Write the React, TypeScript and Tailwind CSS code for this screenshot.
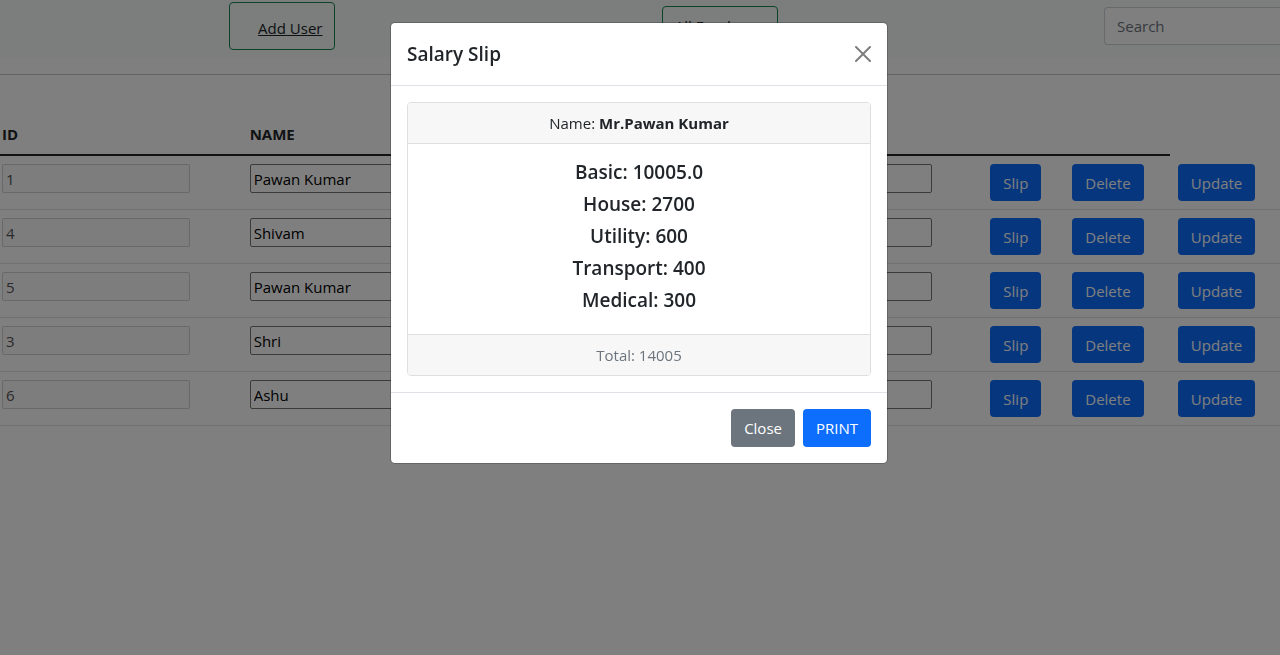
import React from "react";

type Employee = { id: number; name: string };

const employees: Employee[] = [
  { id: 1, name: "Pawan Kumar" },
  { id: 4, name: "Shivam" },
  { id: 5, name: "Pawan Kumar" },
  { id: 3, name: "Shri" },
  { id: 6, name: "Ashu" },
];

const slipLines: [string, string][] = [
  ["Basic", "10005.0"],
  ["House", "2700"],
  ["Utility", "600"],
  ["Transport", "400"],
  ["Medical", "300"],
];

function RowButton({ children }: { children: React.ReactNode }) {
  return (
    <button type="button" className="block h-[37px] rounded bg-[#0d6efd] px-[13px] text-[15px] text-white">
      {children}
    </button>
  );
}

function RowInput({ label, value, disabled }: { label: string; value: string; disabled?: boolean }) {
  return (
    <input
      type="text"
      aria-label={label}
      defaultValue={value}
      disabled={disabled}
      className="block h-[29px] w-[188px] rounded-xs border border-[#767676] bg-white px-[3px] text-[15px] text-black disabled:border-[#767676]/30 disabled:bg-[#efefef]/30 disabled:text-[#545454]"
    />
  );
}

function NavBar() {
  return (
    <nav className="flex h-[57px] items-start bg-[#f6fcf9] pl-[17.9%]">
      <div className="mt-0.5 flex h-12 items-center rounded border border-[#198754] pt-1 pr-3 pl-7">
        <a href="#add" className="underline">Add User</a>
      </div>
      <div className="flex-1" />
      <div className="mt-1.5 flex h-10 w-[116px] items-center rounded border border-[#198754] px-3">
        <a href="#all" className="whitespace-nowrap">All Employee</a>
      </div>
      <div className="flex-1" />
      <input
        type="search"
        aria-label="Search"
        placeholder="Search"
        className="mt-[7px] h-[38px] w-44 rounded-l border border-r-0 border-[#ced4da] bg-white px-3 placeholder:text-[#6c757d]"
      />
    </nav>
  );
}

function EmployeeTable() {
  const head = "border-b-2 border-[#212529] px-0.5 pb-2 text-left align-bottom font-bold";
  const cell = "border-b border-[#dee2e6] py-2 pl-0.5 align-top";
  const action = "border-b border-[#dee2e6] py-2 pl-2 align-top";
  return (
    <table className="w-full table-fixed border-separate border-spacing-0">
      <colgroup>
        <col className="w-[19.35%]" />
        <col className="w-[19.3%]" />
        <col className="w-[19.3%]" />
        <col className="w-[18.8%]" />
        <col className="w-[6.4%]" />
        <col className="w-[8.25%]" />
        <col />
      </colgroup>
      <thead>
        <tr className="h-[41px]">
          <th className={head}>ID</th>
          <th className={head}>NAME</th>
          <th className={head}></th>
          <th className={head}></th>
          <th className={head}></th>
          <th className={head}></th>
        </tr>
      </thead>
      <tbody>
        {employees.map((e) => (
          <tr key={e.id}>
            <td className={cell}><RowInput label="ID" value={String(e.id)} disabled /></td>
            <td className={cell}><RowInput label="Name" value={e.name} /></td>
            <td className={cell}><RowInput label="Department" value="" /></td>
            <td className={cell}><RowInput label="Salary" value="" /></td>
            <td className={action}><RowButton>Slip</RowButton></td>
            <td className={action}><RowButton>Delete</RowButton></td>
            <td className={action}><RowButton>Update</RowButton></td>
          </tr>
        ))}
      </tbody>
    </table>
  );
}

function SalarySlipDialog() {
  return (
    <div className="fixed inset-0 flex items-start justify-center overflow-auto bg-black/50 pt-[22px] pr-[18px] pl-4">
      <div
        role="dialog"
        aria-modal="true"
        aria-labelledby="slip-title"
        className="w-full max-w-[498px] rounded-[5px] border border-black/20 bg-white bg-clip-padding"
      >
        <header className="flex h-[63px] items-center justify-between border-b border-[#dee2e6] px-4">
          <h5 id="slip-title" className="text-[19px] leading-6 font-semibold">Salary Slip</h5>
          <button type="button" aria-label="Close dialog" className="opacity-50">
            <svg viewBox="0 0 16 16" className="size-4" fill="#000">
              <path d="M.293.293a1 1 0 011.414 0L8 6.586 14.293.293a1 1 0 111.414 1.414L9.414 8l6.293 6.293a1 1 0 01-1.414 1.414L8 9.414l-6.293 6.293a1 1 0 01-1.414-1.414L6.586 8 .293 1.707a1 1 0 010-1.414z" />
            </svg>
          </button>
        </header>
        <div className="px-4 py-4">
          <section className="overflow-hidden rounded border border-[#dfdfdf] text-center">
            <div className="border-b border-[#dfdfdf] bg-[#f7f7f7] py-2 leading-6">
              Name: <b className="font-bold">Mr.Pawan Kumar</b>
            </div>
            <div className="pt-4 pb-3.5">
              {slipLines.map(([label, amount]) => (
                <h5 key={label} className="mb-2 text-[19px] leading-6 font-semibold">
                  {label}: {amount}
                </h5>
              ))}
            </div>
            <div className="border-t border-[#dfdfdf] bg-[#f7f7f7] py-2 leading-6 text-[#6c757d]">Total: 14005</div>
          </section>
        </div>
        <footer className="flex justify-end gap-2 border-t border-[#dee2e6] p-4">
          <button type="button" className="h-[38px] rounded bg-[#6c757d] px-[13px] text-white">Close</button>
          <button type="button" className="h-[38px] rounded bg-[#0d6efd] px-[13px] text-white">PRINT</button>
        </footer>
      </div>
    </div>
  );
}

export default function App() {
  return (
    <div className="min-h-screen bg-white font-['Open_Sans','Noto_Sans',sans-serif] text-[15px] leading-6 text-[#212529]">
      <NavBar />
      <hr className="mt-[17px] mb-10 border-t border-[#c8c8c8]" />
      <EmployeeTable />
      <SalarySlipDialog />
    </div>
  );
}
